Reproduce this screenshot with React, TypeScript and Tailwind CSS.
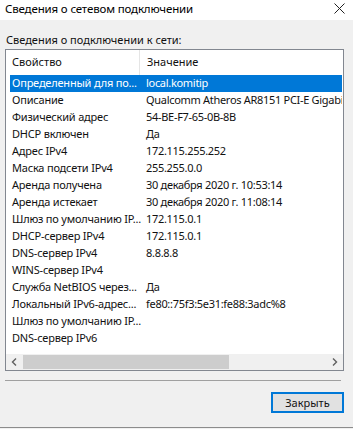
import React from "react";

const rows: [string, string][] = [
  ["Определенный для по...", "local.komitip"],
  ["Описание", "Qualcomm Atheros AR8151 PCI-E Gigabit Ethernet Controller"],
  ["Физический адрес", "54-BE-F7-65-0B-8B"],
  ["DHCP включен", "Да"],
  ["Адрес IPv4", "172.115.255.252"],
  ["Маска подсети IPv4", "255.255.0.0"],
  ["Аренда получена", "30 декабря 2020 г. 10:53:14"],
  ["Аренда истекает", "30 декабря 2020 г. 11:08:14"],
  ["Шлюз по умолчанию IP...", "172.115.0.1"],
  ["DHCP-сервер IPv4", "172.115.0.1"],
  ["DNS-сервер IPv4", "8.8.8.8"],
  ["WINS-сервер IPv4", ""],
  ["Служба NetBIOS через...", "Да"],
  ["Локальный IPv6-адрес...", "fe80::75f3:5e31:fe88:3adc%8"],
  ["Шлюз по умолчанию IP...", ""],
  ["DNS-сервер IPv6", ""],
];

export default function App() {
  return (
    <div className="w-[353px] h-[429px] bg-[#f0f0f0] flex flex-col overflow-hidden text-[11px] text-[#111] font-['Noto_Sans',sans-serif]">
      <div className="h-[20px] bg-white flex items-start justify-between pl-[5px] pr-[8px] pt-[2px] shrink-0">
        <span className="leading-[13px] text-[11.5px] tracking-[-0.15px] text-black">Сведения о сетевом подключении</span>
        <svg width="11" height="11" viewBox="0 0 11 11" className="mt-[1px]">
          <path d="M0.5 0.5 L10.5 10.5 M10.5 0.5 L0.5 10.5" stroke="#222" strokeWidth="1" />
        </svg>
      </div>
      <div className="h-[408px] flex flex-col px-[5px] pt-[11px] border-b border-[#8c8c8c] shrink-0">
        <div className="h-[16px] flex items-center pl-[1px] leading-none">Сведения о подключении к сети:</div>
        <div className="mt-[2px] w-[339px] border border-[#828790] bg-white flex flex-col">
          <div className="h-[25px] flex">
            <div className="w-[134px] border-r border-[#e5e5e5] flex items-center pl-[6px]">Свойство</div>
            <div className="flex-1 flex items-center pl-[7px]">Значение</div>
          </div>
          <div className="flex flex-col pl-[4px] pr-[1px]">
            {rows.map(([k, v], i) => (
              <div
                key={i}
                className={`h-[17px] flex items-center whitespace-nowrap overflow-hidden ${
                  i === 0 ? "bg-[#0078d7] text-white" : ""
                }`}
              >
                <div className="w-[136px] pl-[2px] overflow-hidden shrink-0 tracking-[-0.2px]">{k}</div>
                <div className="whitespace-nowrap tracking-[-0.3px]">{v}</div>
              </div>
            ))}
          </div>
          <div className="h-[7px]" />
          <div className="h-[16px] bg-[#f0f0f0] grid grid-cols-[17px_206px_1fr_17px] items-center">
            <div className="flex items-center justify-center">
              <svg width="7" height="8" viewBox="0 0 7 8">
                <path d="M5 0.5 L1.5 4 L5 7.5" stroke="#606060" strokeWidth="1.4" fill="none" />
              </svg>
            </div>
            <div className="h-[14px] bg-[#cdcdcd]" />
            <div />
            <div className="flex items-center justify-center">
              <svg width="7" height="8" viewBox="0 0 7 8">
                <path d="M2 0.5 L5.5 4 L2 7.5" stroke="#606060" strokeWidth="1.4" fill="none" />
              </svg>
            </div>
          </div>
        </div>
        <div className="mt-[9px] h-[1px] w-[336px] bg-[#a0a0a0]" />
        <div className="flex justify-end mt-[11px] pr-[4px]">
          <div className="w-[73px] h-[21px] border-2 border-[#0078d7] bg-[#e1e1e1] flex items-center justify-center leading-none">
            Закрыть
          </div>
        </div>
      </div>
    </div>
  );
}
